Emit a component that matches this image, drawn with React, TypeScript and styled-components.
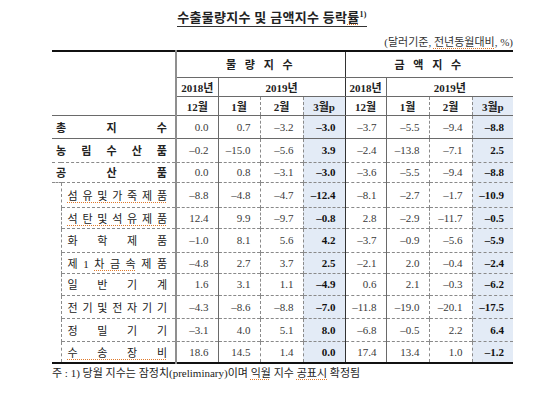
import React from 'react';
import styled, { createGlobalStyle, css } from 'styled-components';

const GlobalStyle = createGlobalStyle`
	body {
		margin: 0;
		background: #ffffff;
	}
	* {
		box-sizing: border-box;
	}
`;

const fontStack = `"Liberation Serif", "Noto Sans CJK KR", serif`;

type Line = 'none' | 'solid' | 'dark' | 'heavy' | 'dashed';

const line = (l: Line) => {
	if (l === 'none') return 'none';
	if (l === 'dashed') return '1px dashed #8a8a8a';
	if (l === 'heavy') return '2px solid #8f8f8f';
	if (l === 'dark') return '1px solid #333333';
	return '1px solid #6a6a6a';
};

// left border of each data column
const colLines: Line[] = ['heavy', 'solid', 'dashed', 'dashed', 'dark', 'solid', 'dashed', 'dashed'];
const colWidths = [9, 115, 42, 42, 43, 42, 41, 43, 43, 41];

const Page = styled.div`
	width: 540px;
	height: 412px;
	padding-top: 10px;
	font-family: ${fontStack};
	color: #222;
`;

const Title = styled.div`
	text-align: center;
	font-size: 13px;
	line-height: 16px;
	font-weight: 700;
	padding-left: 4px;
`;

const TitleText = styled.span`
	display: inline-block;
	border-bottom: 1px solid #333;
	letter-spacing: 0.3px;

	sup {
		font-size: 8px;
		line-height: 0;
		vertical-align: 5px;
		font-family: ${fontStack};
	}
`;

const Block = styled.div`
	width: 461px;
	margin-left: 52px;
`;

const Unit = styled.div`
	text-align: right;
	font-size: 11px;
	line-height: 14px;
	margin-top: 8px;
	margin-bottom: 1px;
	color: #333;
`;

const Squiggle = styled.span`
	text-decoration: underline dotted #e0792a;
	text-underline-offset: 2px;
	text-decoration-thickness: 1px;
`;

const Table = styled.table`
	width: 461px;
	table-layout: fixed;
	border-collapse: collapse;
	border-top: 2px solid #111;
	border-bottom: 2px solid #111;
	font-size: 11px;
`;

const Tr = styled.tr<{ $h: number }>`
	height: ${(p) => p.$h}px;
`;

const Th = styled.th<{ $l?: Line; $shade?: boolean; $spaced?: boolean }>`
	padding: 0;
	font-weight: 700;
	text-align: center;
	color: #222;
	border-left: ${(p) => line(p.$l || 'none')};
	border-bottom: 1px solid #6a6a6a;
	background: ${(p) => (p.$shade ? '#e3ebf6' : 'transparent')};
	letter-spacing: ${(p) => (p.$spaced ? '3px' : '0')};
`;

const BlankTh = styled.th`
	padding: 0;
	border-bottom: 1px solid #6a6a6a;
`;

const Spacer = styled.td<{ $t: Line }>`
	padding: 0;
	border-top: ${(p) => line(p.$t)};
`;

const Label = styled.td<{ $t: Line; $sub?: boolean }>`
	padding: ${(p) => (p.$sub ? '0 8px 0 6px' : '0 8px 0 4px')};
	border-top: ${(p) => line(p.$t)};
	border-left: ${(p) => (p.$sub ? '1px dashed #8a8a8a' : 'none')};
	text-align: justify;
	text-align-last: justify;
	white-space: nowrap;
	font-weight: ${(p) => (p.$sub ? 400 : 700)};
	color: #222;
`;

const Num = styled.td<{ $t: Line; $l: Line; $shade?: boolean }>`
	padding: 0 9px 0 0;
	text-align: right;
	border-top: ${(p) => line(p.$t)};
	border-left: ${(p) => line(p.$l)};
	color: #3a3a3a;
	${(p) =>
		p.$shade &&
		css`
			background: #e3ebf6;
			font-weight: 700;
			color: #111;
		`}
`;

const Note = styled.div`
	font-size: 11px;
	line-height: 14px;
	margin-top: 2px;
	color: #222;
`;

interface IRow {
	label: React.ReactNode;
	sub?: boolean;
	h: number;
	t: Line;
	values: string[];
}

const rows: IRow[] = [
	{ label: '총 지 수', h: 23, t: 'solid', values: ['0.0', '0.7', '–3.2', '–3.0', '–3.7', '–5.5', '–9.4', '–8.8'] },
	{ label: '농 림 수 산 품', h: 24, t: 'solid', values: ['–0.2', '–15.0', '–5.6', '3.9', '–2.4', '–13.8', '–7.1', '2.5'] },
	{ label: '공 산 품', h: 20, t: 'dashed', values: ['0.0', '0.8', '–3.1', '–3.0', '–3.6', '–5.5', '–9.4', '–8.8'] },
	{
		label: <Squiggle>섬 유 및 가 죽 제 품</Squiggle>,
		sub: true,
		h: 25,
		t: 'dashed',
		values: ['–8.8', '–4.8', '–4.7', '–12.4', '–8.1', '–2.7', '–1.7', '–10.9']
	},
	{
		label: <Squiggle>석 탄 및 석 유 제 품</Squiggle>,
		sub: true,
		h: 21,
		t: 'dashed',
		values: ['12.4', '9.9', '–9.7', '–0.8', '2.8', '–2.9', '–11.7', '–0.5']
	},
	{ label: '화 학 제 품', sub: true, h: 24, t: 'dashed', values: ['–1.0', '8.1', '5.6', '4.2', '–3.7', '–0.9', '–5.6', '–5.9'] },
	{
		label: (
			<>
				제 1 <Squiggle>차 금 속</Squiggle> 제 품
			</>
		),
		sub: true,
		h: 21,
		t: 'dashed',
		values: ['–4.8', '2.7', '3.7', '2.5', '–2.1', '2.0', '–0.4', '–2.4']
	},
	{ label: '일 반 기 계', sub: true, h: 22, t: 'dashed', values: ['1.6', '3.1', '1.1', '–4.9', '0.6', '2.1', '–0.3', '–6.2'] },
	{
		label: '전 기 및 전 자 기 기',
		sub: true,
		h: 23,
		t: 'dashed',
		values: ['–4.3', '–8.6', '–8.8', '–7.0', '–11.8', '–19.0', '–20.1', '–17.5']
	},
	{ label: '정 밀 기 기', sub: true, h: 23, t: 'dashed', values: ['–3.1', '4.0', '5.1', '8.0', '–6.8', '–0.5', '2.2', '6.4'] },
	{
		label: <Squiggle>수 송 장 비</Squiggle>,
		sub: true,
		h: 22,
		t: 'dashed',
		values: ['18.6', '14.5', '1.4', '0.0', '17.4', '13.4', '1.0', '–1.2']
	}
];

const months = ['12월', '1월', '2월', '3월p', '12월', '1월', '2월', '3월p'];

const App = () => {
	return (
		<Page>
			<GlobalStyle />
			<Title>
				<TitleText>
					수출물량지수 및 금액지수 등락<Squiggle>률</Squiggle>
					<sup>1)</sup>
				</TitleText>
			</Title>
			<Block>
				<Unit>
					(달러기준, <Squiggle>전년동월대비</Squiggle>, %)
				</Unit>
				<Table>
					<colgroup>
						{colWidths.map((w, i) => (
							<col key={i} style={{ width: w }} />
						))}
					</colgroup>
					<thead>
						<Tr $h={26}>
							<BlankTh rowSpan={3} colSpan={2} />
							<Th colSpan={4} $l='heavy' $spaced>
								물 량 지 수
							</Th>
							<Th colSpan={4} $l='dark' $spaced>
								금 액 지 수
							</Th>
						</Tr>
						<Tr $h={19}>
							<Th $l='heavy'>2018년</Th>
							<Th colSpan={3} $l='solid'>
								2019년
							</Th>
							<Th $l='dark'>2018년</Th>
							<Th colSpan={3} $l='solid'>
								2019년
							</Th>
						</Tr>
						<Tr $h={19}>
							{months.map((m, i) => (
								<Th key={i} $l={colLines[i]} $shade={i % 4 === 3}>
									{m}
								</Th>
							))}
						</Tr>
					</thead>
					<tbody>
						{rows.map((r, ri) => {
							const spacerTop: Line = ri === 3 ? 'dashed' : 'none';
							return (
								<Tr key={ri} $h={r.h}>
									{r.sub ? (
										<>
											<Spacer $t={spacerTop} />
											<Label $t={r.t} $sub>
												{r.label}
											</Label>
										</>
									) : (
										<Label colSpan={2} $t={r.t}>
											{r.label}
										</Label>
									)}
									{r.values.map((v, i) => (
										<Num key={i} $t={r.t} $l={colLines[i]} $shade={i % 4 === 3}>
											{v}
										</Num>
									))}
								</Tr>
							);
						})}
					</tbody>
				</Table>
				<Note>
					주 : 1) 당월 지수는 잠정치(preliminary)이며 <Squiggle>익월</Squiggle> 지수 <Squiggle>공표시</Squiggle> 확정됨
				</Note>
			</Block>
		</Page>
	);
};

export default App;
